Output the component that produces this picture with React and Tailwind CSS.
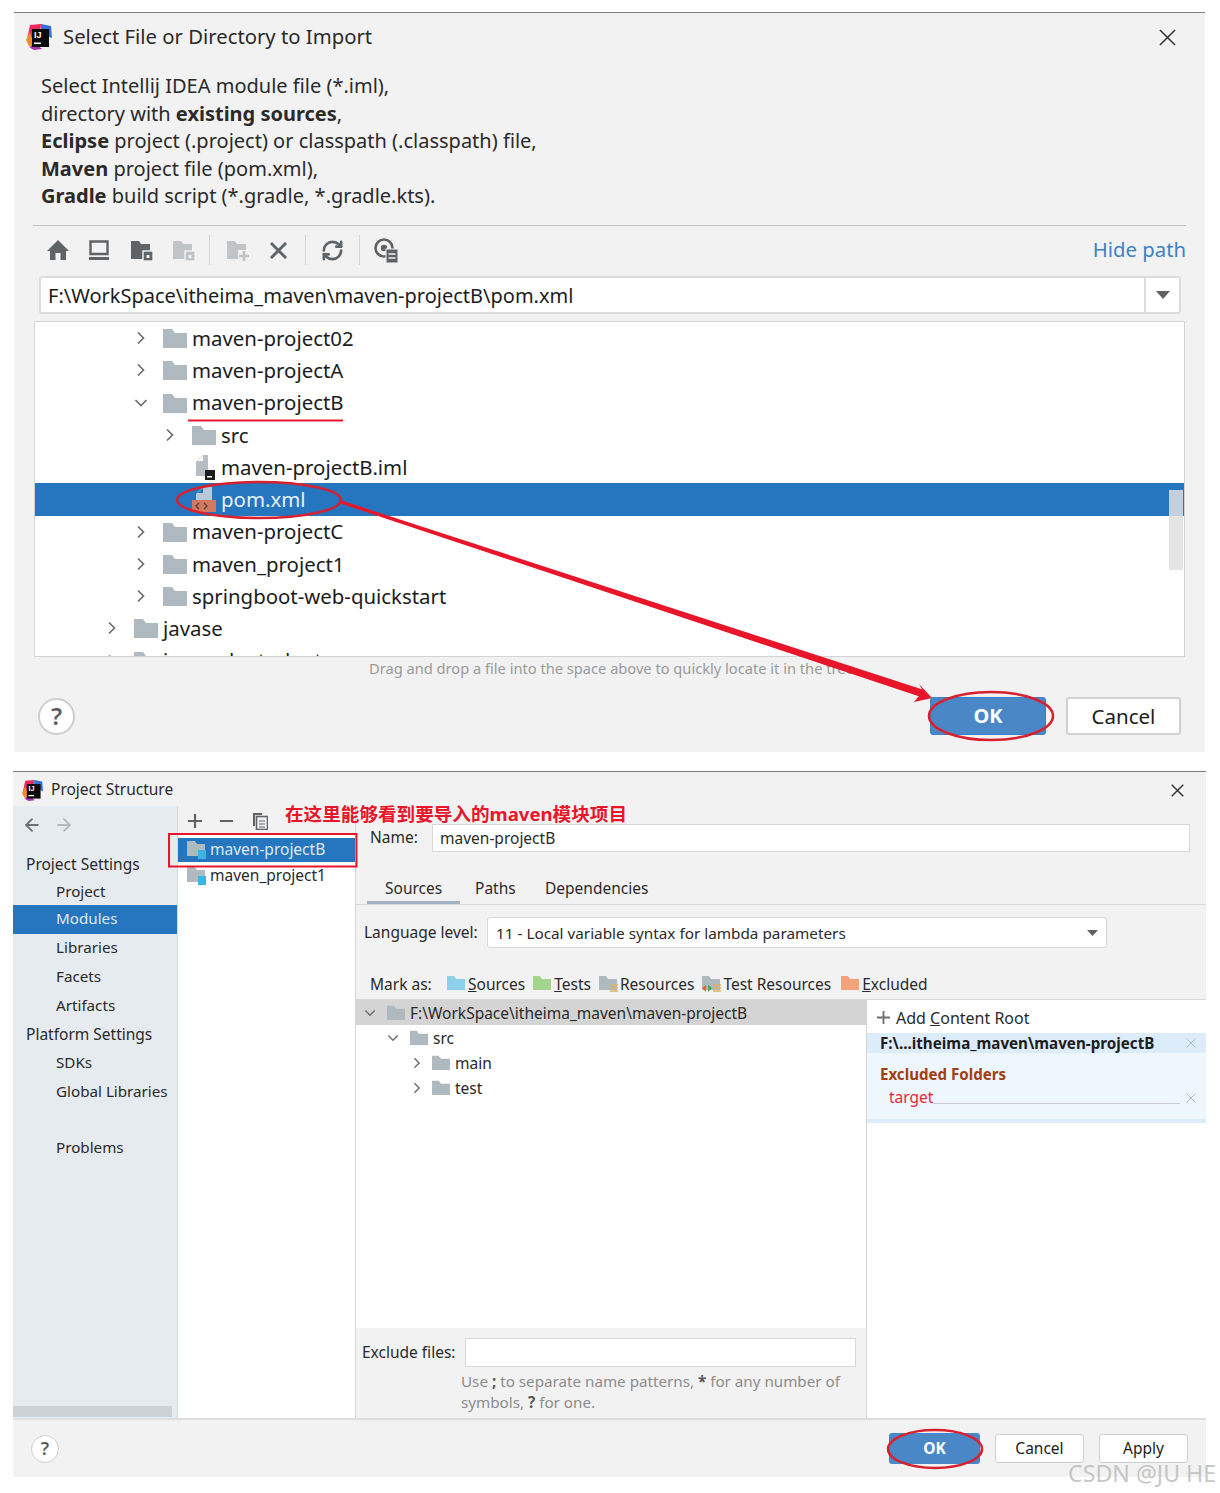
import React from "react";
import { RefreshCw, ArrowLeft, ArrowRight } from "lucide-react";

function Logo({ className }) {
  return (
    <svg viewBox="0 0 26 26" className={className}>
      <path d="M1 15 L4 1 L15 0 L14 12 Z" fill="#f0265f" />
      <path d="M0 16 L4 8 L8 22 L3 22 Z" fill="#f68b2a" />
      <path d="M15 0 L25 2 L26 14 L15 10 Z" fill="#3b6fd8" />
      <path d="M3 23 L8 26 L16 25 L10 20 Z" fill="#b22fb8" />
      <rect x="6" y="5" width="17" height="18" fill="#0a0a0a" />
      <rect x="8" y="18.5" width="7" height="1.6" fill="#ffffff" />
      <text x="8" y="14" fontSize="9" fontWeight="700" fill="#ffffff" fontFamily="Liberation Sans">IJ</text>
    </svg>
  );
}

function Cross({ className, color = "#333333", w = 1.6 }) {
  return (
    <svg viewBox="0 0 18 18" className={className}>
      <path d="M1 1 L17 17 M17 1 L1 17" stroke={color} strokeWidth={w} fill="none" />
    </svg>
  );
}

function Plus2({ className, color = "#5f6366", w = 2.2 }) {
  return (
    <svg viewBox="0 0 14 14" className={className}>
      <path d="M7 0 V14 M0 7 H14" stroke={color} strokeWidth={w} fill="none" />
    </svg>
  );
}

function Folder({ className, color = "#afb9c0" }) {
  return (
    <svg viewBox="0 0 24 20" className={className}>
      <path d="M0 1 H9 L12 5 H24 V20 H0 Z" fill={color} />
    </svg>
  );
}

function Chevron({ open, className }) {
  return (
    <svg viewBox="0 0 14 14" className={className} fill="none" stroke="#6e6e6e" strokeWidth="1.7">
      {open ? <path d="M1.5 4 L7 9.5 L12.5 4" /> : <path d="M4 1.5 L9.5 7 L4 12.5" />}
    </svg>
  );
}

function FileIml() {
  return (
    <svg viewBox="0 0 24 26" className="w-[24px] h-[26px]">
      <path d="M4 8 L11 1 H16 V22 H4 Z" fill="#b6bec4" />
      <path d="M5.5 7 L11 1.8 V7 Z" fill="#ffffff" />
      <rect x="13" y="16" width="10" height="10" fill="#1c1c1c" />
      <rect x="15" y="22" width="5" height="1.5" fill="#ffffff" />
    </svg>
  );
}

function FilePom() {
  return (
    <svg viewBox="0 0 24 26" className="w-[24px] h-[26px]">
      <path d="M4 8 L11 1 H20 V14 H4 Z" fill="#b9c8d6" />
      <path d="M5.5 7 L11 1.8 V7 Z" fill="#2675bf" />
      <rect x="0" y="14" width="24" height="12" fill="#d0795f" />
      <path d="M7 17 L4 20 L7 23 M12 17 L15 20 L12 23" fill="none" stroke="#5a3a33" strokeWidth="1.3" />
    </svg>
  );
}

function ModuleIcon() {
  return (
    <svg viewBox="0 0 20 20" className="w-[20px] h-[20px]">
      <path d="M0 1 H8 L10 4 H18 V16 H0 Z" fill="#afb9c0" />
      <rect x="11" y="10" width="8" height="9" fill="#3fb4e3" />
    </svg>
  );
}

function ToolFolder({ color, badge }) {
  return (
    <svg viewBox="0 0 24 24" className="w-[24px] h-[24px]">
      <path d="M1 3 H9 L11 6 H20 V21 H1 Z" fill={color} />
      {badge === "square" && (
        <g>
          <rect x="13" y="13" width="10" height="10" fill={color} stroke="#f2f2f2" strokeWidth="1.4" />
          <rect x="16.5" y="17" width="3" height="3" fill="#f2f2f2" />
        </g>
      )}
      {badge === "plus" && (
        <g>
          <rect x="12" y="12" width="12" height="12" fill="#f2f2f2" />
          <path d="M18 13 V23 M13 18 H23" stroke={color} strokeWidth="2.6" />
        </g>
      )}
    </svg>
  );
}

function Sep() {
  return <div className="w-px h-[30px] bg-[#d6d6d6]" />;
}

const topRows = [
  { pl: "pl-[100px]", name: "maven-project02", chev: "closed" },
  { pl: "pl-[100px]", name: "maven-projectA", chev: "closed" },
  { pl: "pl-[100px]", name: "maven-projectB", chev: "open" },
  { pl: "pl-[129px]", name: "src", chev: "closed" },
  { pl: "pl-[129px]", name: "maven-projectB.iml", icon: "iml" },
  { pl: "pl-[129px]", name: "pom.xml", icon: "pom", selected: true },
  { pl: "pl-[100px]", name: "maven-projectC", chev: "closed" },
  { pl: "pl-[100px]", name: "maven_project1", chev: "closed" },
  { pl: "pl-[100px]", name: "springboot-web-quickstart", chev: "closed" },
  { pl: "pl-[71px]", name: "javase", chev: "closed" },
  { pl: "pl-[71px]", name: "javaweb-student", chev: "closed" },
];

function TopRow({ row }) {
  return (
    <div className={`h-[32.25px] shrink-0 flex items-center ${row.pl} ${row.selected ? "bg-[#2675bf] text-[#e8f1fa]" : "text-[#1c1c1c]"}`}>
      <div className="w-[28px] shrink-0 flex">
        {row.chev && <Chevron open={row.chev === "open"} className="w-[14px] h-[14px] -ml-px" />}
      </div>
      <div className="w-[29px] shrink-0 flex">
        {row.icon === "iml" ? <FileIml /> : row.icon === "pom" ? <FilePom /> : <Folder className="w-[24px] h-[20px]" />}
      </div>
      <span className="text-[20.4px] leading-none">{row.name}</span>
    </div>
  );
}

function SideItem({ children, head, active, h = "h-[29px]" }) {
  return (
    <div className={`${h} flex items-center ${head ? "pl-[13px] text-[15.5px]" : "pl-[43px] pb-[2px] text-[15.2px]"} ${active ? "bg-[#2675bf] text-[#dfeaf5]" : "text-[#2a2a2a]"}`}>
      {children}
    </div>
  );
}

function BottomRow({ pl, chev, name, bg }) {
  return (
    <div className={`h-[25px] shrink-0 flex items-center ${pl} ${bg || "bg-white"}`}>
      <div className={chev === "open" ? "w-[23px] shrink-0 flex" : "w-[21px] shrink-0 flex"}>
        <Chevron open={chev === "open"} className="w-[12px] h-[12px]" />
      </div>
      <Folder className="w-[18px] h-[15px] mr-[5px]" />
      <span className="text-[15.5px] text-[#2a2a2a] pt-[2px]">{name}</span>
    </div>
  );
}

function Mark({ color, u, rest, badge, mr = "mr-[7px]" }) {
  return (
    <div className={`flex items-center ${mr}`}>
      <svg viewBox="0 0 20 18" className="w-[20px] h-[18px] mr-[2px] -mt-[2px]">
        <path d="M1 1 H8 L10 4 H19 V15 H1 Z" fill={color} />
        {badge === "res" && <path d="M12 10 H20 M12 13 H20 M12 16 H20" stroke="#e0b060" strokeWidth="1.6" />}
        {badge === "test" && (
          <g>
            <path d="M12 10 H20 M12 13 H20 M12 16 H20" stroke="#e0b060" strokeWidth="1.6" />
            <path d="M1 13 L5 10 V17 Z" fill="#e5662c" />
            <path d="M11 13 L7 10 V17 Z" fill="#4aa84a" />
          </g>
        )}
      </svg>
      <span className="text-[15.5px] text-[#2a2a2a]">{u && <u>{u}</u>}{rest}</span>
    </div>
  );
}

export default function App() {
  return (
    <div className="relative w-[1220px] h-[1493px] bg-white pt-[12px] overflow-hidden font-['Noto_Sans','Noto_Sans_CJK_SC',sans-serif]">
      {/* Import dialog */}
      <div className="ml-[14px] w-[1191px] h-[740px] bg-[#f2f2f2] border-t border-[#7d7d7d] flex flex-col">
        <div className="h-[48px] shrink-0 flex items-center pl-[12px] pr-[29px]">
          <Logo className="w-[26px] h-[26px] mr-[11px]" />
          <span className="text-[20.3px] text-[#2a2a2a] flex-1 pb-[2px]">Select File or Directory to Import</span>
          <Cross className="w-[17px] h-[17px]" />
        </div>
        <div className="pl-[27px] text-[20px] leading-[27.5px] text-[#2a2a2a] h-[164px] shrink-0 pt-[11px]">
          <div>Select Intellij IDEA module file (*.iml),</div>
          <div>directory with <b>existing sources</b>,</div>
          <div><b>Eclipse</b> project (.project) or classpath (.classpath) file,</div>
          <div><b>Maven</b> project file (pom.xml),</div>
          <div><b>Gradle</b> build script (*.gradle, *.gradle.kts).</div>
        </div>
        <div className="ml-[19px] mr-[19px] h-px bg-[#c4c4c4] shrink-0" />
        <div className="h-[50px] shrink-0 flex items-center pb-[2px] pl-[32px] pr-[19px]">
          <svg viewBox="0 0 24 24" className="w-[24px] h-[24px] mr-[17px]">
            <path d="M12 2 L23 13 H20 V22 H14.5 V15 H9.5 V22 H4 V13 H1 Z" fill="#5f6366" />
          </svg>
          <svg viewBox="0 0 24 24" className="w-[24px] h-[24px] mr-[19px]">
            <path d="M3.5 3.5 H20.5 V16 H3.5 Z" fill="none" stroke="#5f6366" strokeWidth="2.4" />
            <rect x="2" y="19" width="20" height="3" fill="#5f6366" />
          </svg>
          <div className="mr-[18px]"><ToolFolder color="#5f6366" badge="square" /></div>
          <div className="mr-[13px]"><ToolFolder color="#c1c4c6" badge="square" /></div>
          <Sep />
          <div className="ml-[16px] mr-[20px]"><ToolFolder color="#c1c4c6" badge="plus" /></div>
          <Cross className="w-[17px] h-[17px] mr-[18px]" color="#5f6366" w={3} />
          <Sep />
          <RefreshCw className="w-[23px] h-[23px] text-[#5f6366] ml-[15px] mr-[15px]" strokeWidth={2.8} />
          <Sep />
          <svg viewBox="0 0 26 26" className="w-[26px] h-[26px] ml-[13px]">
            <circle cx="11" cy="11" r="8.5" fill="none" stroke="#5f6366" strokeWidth="2.6" />
            <circle cx="11" cy="11" r="3.2" fill="#5f6366" />
            <rect x="13" y="12" width="12" height="14" fill="#5f6366" stroke="#f2f2f2" strokeWidth="1" />
            <path d="M15.5 17 H22.5 M15.5 21 H22.5" stroke="#f2f2f2" strokeWidth="1.6" />
          </svg>
          <span className="ml-auto text-[20.3px] text-[#3d83c4] pb-[2px]">Hide path</span>
        </div>
        <div className="ml-[25px] mr-[24px] h-[38px] shrink-0 bg-white border-2 border-[#dcdcdc] rounded-[3px] flex items-center pl-[7px]">
          <span className="text-[20px] text-[#1c1c1c] flex-1 pt-[1px]">F:\WorkSpace\itheima_maven\maven-projectB\pom.xml</span>
          <div className="w-[35px] h-full border-l-2 border-[#dcdcdc] flex items-center justify-center">
            <svg viewBox="0 0 14 8" className="w-[14px] h-[8px]"><path d="M0 0 H14 L7 8 Z" fill="#5f6366" /></svg>
          </div>
        </div>
        <div className="relative mt-[7px] ml-[20px] mr-[20px] h-[336px] shrink-0 bg-white border border-[#d4d4d4] overflow-hidden">
          {topRows.map((r) => (
            <TopRow key={r.name} row={r} />
          ))}
          <div className="absolute left-[1134px] top-[168px] w-[14px] h-[82px] bg-[#dfdfdf]/85 border-b-2 border-white" />
        </div>
        <div className="h-[23px] shrink-0 flex items-center pl-[355px] text-[14.65px] text-[#9a9a9a]">
          Drag and drop a file into the space above to quickly locate it in the tree
        </div>
        <div className="flex-1 flex items-center pl-[24px] pr-[24px]">
          <div className="w-[37px] h-[37px] rounded-full bg-white border-2 border-[#cfcfcf] flex items-center justify-center text-[24px] font-semibold text-[#5c5c5c]">?</div>
          <div className="ml-auto w-[116px] h-[38px] rounded-[3px] bg-[#4a87c7] border border-[#3f7ebf] flex items-center justify-center text-[20px] font-bold text-white">OK</div>
          <div className="ml-[20px] w-[115px] h-[38px] rounded-[3px] bg-white border-2 border-[#d0d0d0] flex items-center justify-center text-[20.5px] text-[#1c1c1c]">Cancel</div>
        </div>
      </div>

      {/* Project Structure dialog */}
      <div className="mt-[19px] ml-[13px] w-[1193px] h-[706px] bg-[#f2f2f2] border-t border-[#7d7d7d] flex flex-col">
        <div className="h-[34px] shrink-0 flex items-center pt-[2px] pl-[9px] pr-[22px]">
          <Logo className="w-[21px] h-[21px] mr-[8px]" />
          <span className="text-[15.5px] text-[#2a2a2a] flex-1">Project Structure</span>
          <Cross className="w-[13px] h-[13px]" w={2} />
        </div>
        <div className="h-[612px] shrink-0 flex">
          {/* sidebar */}
          <div className="w-[165px] shrink-0 bg-[#e6ebf0] border-r border-[#d5dbe1] flex flex-col">
            <div className="h-[44px] shrink-0 flex items-start pt-[9px] pl-[9px] gap-[12px]">
              <ArrowLeft className="w-[20px] h-[20px] text-[#6e7175]" strokeWidth={2.2} />
              <ArrowRight className="w-[20px] h-[20px] text-[#b5b9bd]" strokeWidth={2.2} />
            </div>
            <SideItem head>Project Settings</SideItem>
            <SideItem h="h-[26px]">Project</SideItem>
            <SideItem active>Modules</SideItem>
            <SideItem>Libraries</SideItem>
            <SideItem>Facets</SideItem>
            <SideItem h="h-[28px]">Artifacts</SideItem>
            <SideItem head>Platform Settings</SideItem>
            <SideItem>SDKs</SideItem>
            <SideItem>Global Libraries</SideItem>
            <div className="mt-[27px]"><SideItem>Problems</SideItem></div>
            <div className="mt-auto mb-[1px] w-[159px] h-[11px] bg-[#cdd2d7]" />
          </div>
          {/* modules list */}
          <div className="w-[178px] shrink-0 bg-white border-r border-[#d4d4d4] flex flex-col">
            <div className="h-[28px] shrink-0 bg-[#f2f2f2] flex items-center pl-[10px] pt-[2px]">
              <Plus2 className="w-[14px] h-[14px] mr-[18px]" />
              <div className="w-[13px] h-[2.2px] bg-[#5f6366] mr-[19px]" />
              <svg viewBox="0 0 16 18" className="w-[16px] h-[18px]">
                <path d="M1 1 H10 V3 H3 V14 H1 Z" fill="#5f6366" />
                <rect x="4.5" y="4.5" width="11" height="13" fill="none" stroke="#5f6366" strokeWidth="1.6" />
                <path d="M7 9 H13 M7 12 H13 M7 15 H13" stroke="#5f6366" strokeWidth="1.2" />
              </svg>
            </div>
            <div className="mt-[4px] h-[24px] bg-[#2675bf] flex items-center pl-[9px] text-[15.5px] text-[#dfeaf5]">
              <ModuleIcon /><span className="ml-[3px]">maven-projectB</span>
            </div>
            <div className="mt-[2px] h-[24px] flex items-center pl-[9px] text-[15.5px] text-[#2a2a2a]">
              <ModuleIcon /><span className="ml-[3px]">maven_project1</span>
            </div>
          </div>
          {/* details */}
          <div className="flex-1 flex flex-col min-w-0">
            <div className="mt-[18px] h-[28px] shrink-0 flex items-center pl-[14px]">
              <span className="w-[62px] text-[15.5px] text-[#2a2a2a]">Name:</span>
              <div className="w-[758px] h-full bg-white border border-[#d8d8d8] flex items-center pl-[7px] pt-[1px] text-[15.5px] text-[#2a2a2a]">maven-projectB</div>
            </div>
            <div className="h-[53px] shrink-0 border-b border-[#d8d8d8] flex items-end pl-[11px]">
              <div className="w-[93px] h-[28px] pt-[1px] border-b-[3px] border-[#a3b2c2] pl-[18px] text-[15.5px] text-[#2a2a2a] flex items-center">Sources</div>
              <div className="w-[71px] h-[28px] pt-[1px] pl-[15px] pb-[3px] text-[15.5px] text-[#2a2a2a] flex items-center">Paths</div>
              <div className="h-[28px] pt-[1px] pl-[14px] pb-[3px] text-[15.5px] text-[#2a2a2a] flex items-center">Dependencies</div>
            </div>
            <div className="mt-[12px] h-[31px] shrink-0 flex items-center pl-[8px]">
              <span className="w-[123px] text-[15.5px] text-[#2a2a2a]">Language level:</span>
              <div className="w-[620px] h-full bg-white border border-[#d8d8d8] rounded-[3px] flex items-center pl-[8px] pr-[8px] pt-[1px] text-[15.3px] text-[#2a2a2a]">
                <span className="flex-1">11 - Local variable syntax for lambda parameters</span>
                <svg viewBox="0 0 11 6" className="w-[11px] h-[6px]"><path d="M0 0 H11 L5.5 6 Z" fill="#5f6366" /></svg>
              </div>
            </div>
            <div className="h-[52px] shrink-0 flex items-end pl-[14px] border-b border-[#d8d8d8]">
              <div className="h-[28px] flex items-center">
                <span className="w-[76px] text-[15.5px] text-[#2a2a2a]">Mark as:</span>
                <Mark color="#8ed0ec" u="S" rest="ources" />
                <Mark color="#a3d68c" u="T" rest="ests" />
                <Mark color="#afb9c0" rest="Resources" badge="res" />
                <Mark color="#afb9c0" rest="Test Resources" badge="test" mr="mr-[9px]" />
                <Mark color="#f3a27c" u="E" rest="xcluded" />
              </div>
            </div>
            <div className="flex-1 flex min-h-0">
              <div className="w-[511px] shrink-0 border-r border-[#d4d4d4] flex flex-col">
                <div className="flex-1 bg-white flex flex-col">
                  <BottomRow pl="pl-[8px]" chev="open" name="F:\WorkSpace\itheima_maven\maven-projectB" bg="bg-[#d4d4d4]" />
                  <BottomRow pl="pl-[31px]" chev="open" name="src" />
                  <BottomRow pl="pl-[55px]" chev="closed" name="main" />
                  <BottomRow pl="pl-[55px]" chev="closed" name="test" />
                </div>
                <div className="h-[90px] shrink-0 bg-[#f2f2f2] pt-[10px] pl-[6px]">
                  <div className="flex items-center h-[29px]">
                    <span className="w-[103px] text-[15.5px] text-[#2a2a2a]">Exclude files:</span>
                    <div className="w-[391px] h-full bg-white border border-[#d8d8d8]" />
                  </div>
                  <div className="mt-[4px] pl-[99px] text-[15.2px] leading-[21px] text-[#8c8c8c]">
                    <div>Use <b className="text-[#555555]">;</b> to separate name patterns, <b className="text-[#555555]">*</b> for any number of</div>
                    <div>symbols, <b className="text-[#555555]">?</b> for one.</div>
                  </div>
                </div>
              </div>
              <div className="flex-1 bg-white flex flex-col">
                <div className="h-[33px] shrink-0 bg-white flex items-center pl-[10px] pt-[2px] text-[16px] text-[#2a2a2a]">
                  <Plus2 className="w-[13px] h-[13px] mr-[6px]" color="#6e6e6e" w={2} />
                  <span>Add <u>C</u>ontent Root</span>
                </div>
                <div className="h-[20px] shrink-0 bg-[#dcecfb] flex items-center pl-[13px] pr-[10px] text-[15.2px] font-bold text-[#1c1c1c]">
                  <span className="flex-1">F:\...itheima_maven\maven-projectB</span>
                  <Cross className="w-[10px] h-[10px]" color="#b4bac0" w={1.8} />
                </div>
                <div className="h-[66px] shrink-0 bg-[#eef7fe] pl-[13px] pr-[10px] pt-[11px]">
                  <div className="text-[15.1px] leading-[20px] font-bold text-[#a0400f]">Excluded Folders</div>
                  <div className="flex items-center h-[26px] pt-[2px] pl-[9px]">
                    <span className="text-[15.5px] text-[#f0283c]">target</span>
                    <div className="flex-1 h-px bg-[#c8ccd0] mt-[10px] mr-[6px]" />
                    <Cross className="w-[10px] h-[10px]" color="#b4bac0" w={1.8} />
                  </div>
                </div>
                <div className="h-[4px] shrink-0 bg-[#dcecfb]" />
              </div>
            </div>
          </div>
        </div>
        <div className="flex-1 border-t-2 border-[#dedede] flex items-center pl-[18px] pr-[18px]">
          <div className="w-[28px] h-[28px] rounded-full bg-white border border-[#cfcfcf] flex items-center justify-center text-[18px] font-semibold text-[#5c5c5c]">?</div>
          <div className="ml-auto w-[91px] h-[31px] pt-[1px] rounded-[3px] bg-[#4a87c7] flex items-center justify-center text-[15.5px] font-bold text-white">OK</div>
          <div className="ml-[15px] w-[89px] h-[29px] pt-[1px] rounded-[3px] bg-white border border-[#d0d0d0] flex items-center justify-center text-[15.5px] text-[#1c1c1c]">Cancel</div>
          <div className="ml-[15px] w-[89px] h-[29px] pt-[1px] rounded-[3px] bg-white border border-[#d0d0d0] flex items-center justify-center text-[15.5px] text-[#1c1c1c]">Apply</div>
        </div>
      </div>

      {/* Annotations over the screenshot */}
      <svg viewBox="0 0 1220 1493" className="absolute inset-0 w-[1220px] h-[1493px] pointer-events-none">
        <path d="M188 420.5 H343" stroke="#e8162a" strokeWidth="2" />
        <ellipse cx="259" cy="500" rx="82" ry="18" fill="none" stroke="#d8202f" strokeWidth="2.5" />
        <polygon points="340,500 339,503 921,697 924,690" fill="#e8162a" />
        <polygon points="932,698 919,684 923,691 914,702" fill="#e8162a" />
        <ellipse cx="991" cy="716" rx="62" ry="24" fill="none" stroke="#d8202f" strokeWidth="2.5" />
        <rect x="169" y="834" width="187.5" height="32.5" fill="none" stroke="#e8162a" strokeWidth="2" />
        <ellipse cx="935" cy="1449" rx="47" ry="19" fill="none" stroke="#d8202f" strokeWidth="2.5" />
      </svg>
      <div className="absolute left-[285px] top-[801px] text-[18.6px] leading-[26px] font-bold text-[#e8162a] whitespace-nowrap">在这里能够看到要导入的maven模块项目</div>
      <div className="absolute left-[1068px] top-[1458px] text-[23.2px] leading-[30px] text-[#b8b8b8]/80 whitespace-nowrap">CSDN @JU HE</div>
    </div>
  );
}
